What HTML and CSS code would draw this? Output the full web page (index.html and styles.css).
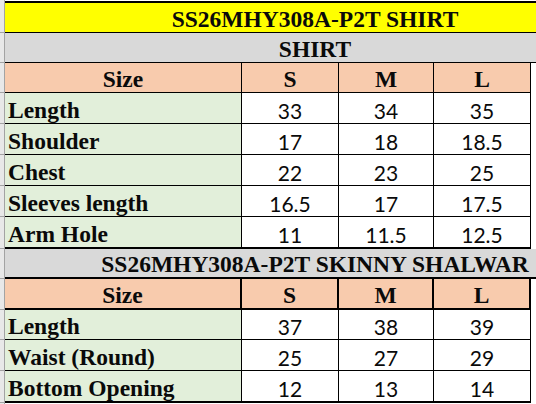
FILE: index.html
```html
<!DOCTYPE html>
<html>
<head>
<meta charset="utf-8">
<link rel="stylesheet" href="styles.css">
</head>
<body>
<div class="row spacer"><div class="gut"></div><div class="fill"></div></div>
<div class="row h32"><div class="gut"></div><div class="title yellow"><span>SS26MHY308A-P2T SHIRT</span></div></div>
<div class="row h30"><div class="gut"></div><div class="title grey"><span>SHIRT</span></div></div>
<div class="row h30 head"><div class="gut"></div><div class="c lbl hd">Size</div><div class="c s">S</div><div class="c m">M</div><div class="c l">L</div><div class="fill"></div></div>
<div class="row h31"><div class="gut"></div><div class="c lbl">Length</div><div class="c s">33</div><div class="c m">34</div><div class="c l">35</div><div class="fill"></div></div>
<div class="row h31"><div class="gut"></div><div class="c lbl">Shoulder</div><div class="c s">17</div><div class="c m">18</div><div class="c l">18.5</div><div class="fill"></div></div>
<div class="row h31"><div class="gut"></div><div class="c lbl">Chest</div><div class="c s">22</div><div class="c m">23</div><div class="c l">25</div><div class="fill"></div></div>
<div class="row h31"><div class="gut"></div><div class="c lbl">Sleeves length</div><div class="c s">16.5</div><div class="c m">17</div><div class="c l">17.5</div><div class="fill"></div></div>
<div class="row h32 thick"><div class="gut"></div><div class="c lbl">Arm Hole</div><div class="c s">11</div><div class="c m">11.5</div><div class="c l">12.5</div><div class="fill"></div></div>
<div class="row h30"><div class="gut"></div><div class="title grey tb2"><span>SS26MHY308A-P2T SKINNY SHALWAR</span></div></div>
<div class="row h31 head head2"><div class="gut"></div><div class="c lbl hd">Size</div><div class="c s">S</div><div class="c m">M</div><div class="c l">L</div><div class="fill"></div></div>
<div class="row h30"><div class="gut"></div><div class="c lbl">Length</div><div class="c s">37</div><div class="c m">38</div><div class="c l">39</div><div class="fill"></div></div>
<div class="row h31"><div class="gut"></div><div class="c lbl">Waist (Round)</div><div class="c s">25</div><div class="c m">27</div><div class="c l">29</div><div class="fill"></div></div>
<div class="row h32 thick"><div class="gut"></div><div class="c lbl">Bottom Opening</div><div class="c s">12</div><div class="c m">13</div><div class="c l">14</div><div class="fill"></div></div>
<div class="row rest"><div class="gut"></div><div class="fill"></div></div>
</body>
</html>
```
FILE: styles.css
```css
* { box-sizing: border-box; margin: 0; padding: 0; }
html, body { width: 536px; height: 404px; overflow: hidden; background: #fff; }
body { font-family: "Liberation Serif", "Times New Roman", serif; color: #0a0a0a; }

.row { display: flex; }
.spacer { height: 1px; }
.h30 { height: 30px; }
.h31 { height: 31px; }
.h32 { height: 32px; }
.rest { height: 10px; }

.gut {
  width: 5px; flex: none;
  background: #e8e8e8;
  border-right: 1px solid #a3a3a3;
  border-bottom: 1px solid #a3a3a3;
}
.spacer .gut, .rest .gut { border-bottom: 0; }
.fill { flex: 1; }

.title {
  flex: 1; overflow: hidden;
  display: flex; align-items: flex-end;
  font-weight: bold; font-size: 23.5px; line-height: 26px;
  border-bottom: 1px solid #000;
}
.title span { flex: none; width: 620px; text-align: center; white-space: nowrap; }
.yellow { background: #ffff00; border-top: 2px solid #000; }
.grey { background: #d9d9d9; }
.tb2 { border-bottom-width: 2px; }

.c {
  flex: none;
  display: flex; align-items: flex-end; justify-content: center;
  border-right: 1px solid #000; border-bottom: 1px solid #000;
  font-family: Lato, "Liberation Sans", sans-serif; font-size: 21px; line-height: 25px;
  white-space: nowrap;
}
.lbl {
  width: 237px; justify-content: flex-start; padding-left: 3px;
  background: #e2efda;
  font-family: "Liberation Serif", "Times New Roman", serif;
  font-weight: bold; font-size: 23.5px; line-height: 26px;
}
.s { width: 97px; }
.m { width: 95px; }
.l { width: 97px; }

.head .c {
  background: #f8cbad;
  font-family: "Liberation Serif", "Times New Roman", serif;
  font-weight: bold; font-size: 23.5px; line-height: 26px;
}
.head .hd { justify-content: center; padding-left: 0; }
.head2 .c { border-right-width: 2px; border-bottom-width: 2px; }
.thick .c { border-bottom-width: 2px; }
```
